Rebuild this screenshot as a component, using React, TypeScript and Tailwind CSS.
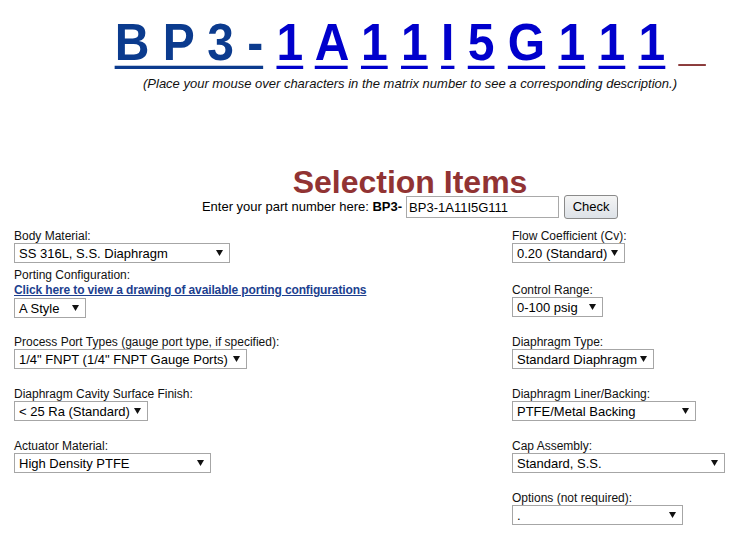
import React from 'react';

const codeChars = ['1', 'A', '1', '1', 'I', '5', 'G', '1', '1', '1'];

function Arrow() {
  return (
    <svg width="7" height="6" viewBox="0 0 7 6" className="shrink-0">
      <polygon points="0,0 7,0 3.5,6" fill="#111" />
    </svg>
  );
}

function FakeSelect({ value, width }: { value: string; width: string }) {
  return (
    <div
      className={`${width} h-5 flex items-center justify-between border border-[#a6a6a6] bg-white pl-[4px] pr-[6px] text-[13px] leading-none text-black`}
    >
      <span className="whitespace-nowrap">{value}</span>
      <Arrow />
    </div>
  );
}

function Label({ children }: { children: React.ReactNode }) {
  return <div className="h-[14px] text-[12px] leading-[14px] text-[#111]">{children}</div>;
}

export default function App() {
  return (
    <div className="min-h-screen bg-white font-['Liberation_Sans',Arial,sans-serif] text-black">
      {/* matrix number header */}
      <div className="pl-[83px] pt-[21px] text-center">
        <div className="h-[48px] origin-bottom scale-y-[1.09] text-[48px] font-bold leading-[48px] whitespace-nowrap">
          <a href="#" className="text-[#0b3b8e] underline decoration-[3px] underline-offset-[5px]">
            B P 3 -
          </a>
          {codeChars.map((c, i) => (
            <React.Fragment key={i}>
              {' '}
              <a href="#" className="text-[#0000cc] underline decoration-[3px] underline-offset-[5px]">
                {c}
              </a>
            </React.Fragment>
          ))}{' '}
          <span className="text-[#8b3a3a]">_</span>
        </div>
        <div className="mt-[7px] h-[15px] text-[13px] italic leading-[15px] text-[#111]">
          (Place your mouse over characters in the matrix number to see a corresponding description.)
        </div>

        <div className="mt-[77px] h-[28px] text-[32px] font-bold leading-[28px] text-[#913333]">
          Selection Items
        </div>
        <div className="-mt-px flex h-[24px] items-center justify-center text-[13px]">
          <span className="whitespace-pre">Enter your part number here: </span>
          <span className="font-bold">BP3-</span>
          <input
            readOnly
            value="BP3-1A11I5G111"
            className="ml-[4px] h-[22px] w-[153px] border border-[#a9a9a9] px-[2px] text-[13px] outline-none"
          />
          <button className="ml-[5px] h-[24px] w-[54px] rounded-[3px] border border-[#8a8a8a] bg-gradient-to-b from-[#f4f4f4] to-[#dde2e8] text-[13px]">
            Check
          </button>
        </div>
      </div>

      {/* selection columns */}
      <div className="mt-[10px] flex pl-[14px]">
        <div className="w-[498px]">
          <Label>Body Material:</Label>
          <FakeSelect value="SS 316L, S.S. Diaphragm" width="w-[216px]" />
          <div className="mt-[5px]">
            <Label>Porting Configuration:</Label>
          </div>
          <a
            href="#"
            className="mt-px block h-[14px] text-[12px] font-bold leading-[14px] tracking-[-0.13px] text-[#1d3f8f] underline"
          >
            Click here to view a drawing of available porting configurations
          </a>
          <div className="mt-px">
            <FakeSelect value="A Style" width="w-[72px]" />
          </div>
          <div className="mt-[17px]">
            <Label>Process Port Types (gauge port type, if specified):</Label>
            <FakeSelect value={'1/4" FNPT (1/4" FNPT Gauge Ports)'} width="w-[233px]" />
          </div>
          <div className="mt-[18px]">
            <Label>Diaphragm Cavity Surface Finish:</Label>
            <FakeSelect value="< 25 Ra (Standard)" width="w-[134px]" />
          </div>
          <div className="mt-[18px]">
            <Label>Actuator Material:</Label>
            <FakeSelect value="High Density PTFE" width="w-[197px]" />
          </div>
        </div>

        <div>
          <Label>Flow Coefficient (Cv):</Label>
          <FakeSelect value="0.20 (Standard)" width="w-[113px]" />
          <div className="mt-[20px]">
            <Label>Control Range:</Label>
            <FakeSelect value="0-100 psig" width="w-[91px]" />
          </div>
          <div className="mt-[18px]">
            <Label>Diaphragm Type:</Label>
            <FakeSelect value="Standard Diaphragm" width="w-[142px]" />
          </div>
          <div className="mt-[18px]">
            <Label>Diaphragm Liner/Backing:</Label>
            <FakeSelect value="PTFE/Metal Backing" width="w-[184px]" />
          </div>
          <div className="mt-[18px]">
            <Label>Cap Assembly:</Label>
            <FakeSelect value="Standard, S.S." width="w-[213px]" />
          </div>
          <div className="mt-[18px]">
            <Label>Options (not required):</Label>
            <FakeSelect value="." width="w-[171px]" />
          </div>
        </div>
      </div>
    </div>
  );
}
